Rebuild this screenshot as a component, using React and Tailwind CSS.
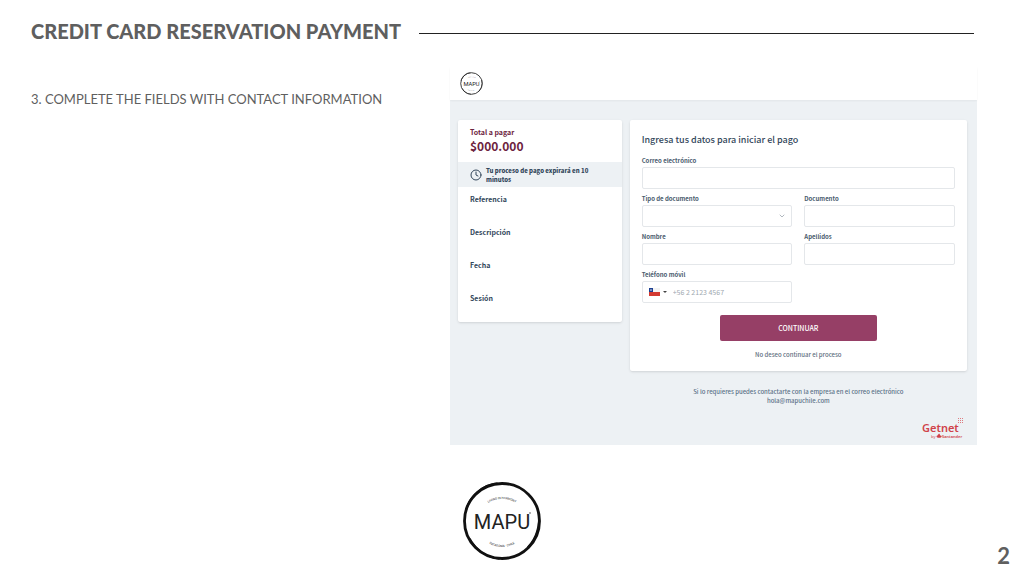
import clsx from 'clsx'
import { ChevronDown, Clock } from 'lucide-react'
import React, { useId } from 'react'

const summaryItems = ['Referencia', 'Descripción', 'Fecha', 'Sesión']

const controlClasses =
  'block h-[22px] w-full rounded-xs border border-[#e4e7ea] bg-white px-2 text-[7px] text-[#33475b] outline-none focus:border-[#963f66]'

const MapuLogo = ({ className }) => {
  const id = useId()

  return (
    <svg
      aria-label="Mapu"
      className={className}
      role="img"
      viewBox="0 0 80 80"
    >
      <defs>
        <path d="M15 41a25 23 0 0 1 50 0" id={`${id}-top`} />
        <path d="M14 40a26 26 0 0 0 52 0" id={`${id}-bottom`} />
      </defs>
      <circle
        cx="40"
        cy="40"
        fill="none"
        r="37.5"
        stroke="#111"
        strokeWidth="2.8"
      />
      <g fill="none" stroke="#111" strokeLinecap="round">
        <path d="M4 29C8 15 20 4 35 2.5" strokeWidth="2" />
        <path d="M76 29C79 44 74 58 66 66" strokeWidth="1.8" />
        <path d="M8 58C14 69 25 76 37 78" strokeWidth="1.6" />
      </g>
      <g fill="#222" fontFamily="Roboto, sans-serif">
        <text fontSize="3" textAnchor="middle">
          <textPath href={`#${id}-top`} startOffset="50%">
            LIVING IN HARMONY
          </textPath>
        </text>
        <text fontSize="20" textAnchor="middle" x="40" y="48">
          MAPU
        </text>
        <circle cx="68" cy="32" r="0.7" />
        <text fontSize="3" textAnchor="middle">
          <textPath href={`#${id}-bottom`} startOffset="50%">
            PATAGONIA - CHILE
          </textPath>
        </text>
      </g>
    </svg>
  )
}

const GetnetLogo = () => (
  <svg
    aria-label="Getnet by Santander"
    className="h-[22px] w-[43px]"
    role="img"
    viewBox="0 0 43 22"
  >
    <g fill="#d04249" fontFamily="'Noto Sans', sans-serif">
      <text fontSize="11" fontWeight="600" x="0" y="14">
        Getnet
      </text>
      <text fontSize="4" x="9" y="20">
        by
      </text>
      <path d="M17 15.4c1 .7.8 1.4 1.4 2 .9.1 1.3.5 1.3 1 0 1.8-5.2 1.8-5.2 0 0-.5.4-.9 1.1-1 0-.7.9-1 1.4-2Z" />
      <text fontSize="4" fontWeight="600" x="20" y="20">
        Santander
      </text>
    </g>
    <path
      d="M36 .5h5M36 2.5h5M36 4.5h5"
      stroke="#dd7c81"
      strokeDasharray="1 1"
      strokeWidth="1"
    />
  </svg>
)

const ChileFlag = () => (
  <svg aria-hidden="true" className="h-2 w-[11px]" viewBox="0 0 11 8">
    <path d="M0 0h11v4H0Z" fill="#f3f3f3" />
    <path d="M0 4h11v4H0Z" fill="#d33a32" />
    <path d="M0 0h4v4H0Z" fill="#1c3f91" />
    <path d="m2 .8.3.9h.9l-.7.5.3.9-.8-.6-.8.6.3-.9-.7-.5h.9Z" fill="white" />
  </svg>
)

const Field = ({ children, className, id, label }) => (
  <div className={className}>
    <label
      className="block h-3 text-[6px] leading-3 font-bold text-[#4a5c6e]"
      htmlFor={id}
    >
      {label}
    </label>
    {children}
  </div>
)

const Summary = () => (
  <aside className="rounded-xs bg-white shadow-sm">
    <div className="h-[42px] px-3 pt-[7px] text-[#6d2340]">
      <p className="text-[7px] leading-[11px] font-bold">Total a pagar</p>
      <p className="text-[12px] leading-4 font-bold">$000.000</p>
    </div>
    <div className="flex h-[25px] items-center gap-1 bg-[#edf1f4] pr-4 pl-3 text-[#33475b]">
      <Clock className="size-3 shrink-0" />
      <p className="text-[6px] leading-[9px] font-black">
        Tu proceso de pago expirará en 10
        <br />
        minutos
      </p>
    </div>
    <dl className="px-3 pt-2 text-[7px] leading-[9px] text-[#33475b]">
      {summaryItems.map((item) => (
        <div className="h-[33px] last:h-7" key={item}>
          <dt className="font-bold">{item}</dt>
          <dd />
        </div>
      ))}
    </dl>
  </aside>
)

const ContactForm = () => (
  <form
    className="rounded-xs bg-white px-3 pt-3 pb-[10px] shadow-sm"
    onSubmit={(event) => event.preventDefault()}
  >
    <h2 className="mb-2 text-[9px] leading-[15px] font-medium text-[#33475b]">
      Ingresa tus datos para iniciar el pago
    </h2>
    <div className="grid grid-cols-2 gap-x-3 gap-y-1">
      <Field className="col-span-2" id="email" label="Correo electrónico">
        <input className={controlClasses} id="email" type="email" />
      </Field>
      <Field id="document-type" label="Tipo de documento">
        <div className="relative">
          <select
            className={clsx(controlClasses, 'appearance-none')}
            defaultValue=""
            id="document-type"
          >
            <option value="" />
            <option value="rut">RUT</option>
          </select>
          <ChevronDown className="pointer-events-none absolute top-[7px] right-1.5 size-2 text-[#8a949e]" />
        </div>
      </Field>
      <Field id="document" label="Documento">
        <input className={controlClasses} id="document" type="text" />
      </Field>
      <Field id="first-name" label="Nombre">
        <input className={controlClasses} id="first-name" type="text" />
      </Field>
      <Field id="last-name" label="Apellidos">
        <input className={controlClasses} id="last-name" type="text" />
      </Field>
      <Field id="phone" label="Teléfono móvil">
        <div className="flex h-[22px] items-center rounded-xs border border-[#e4e7ea] pl-1.5">
          <button
            aria-label="Código de país"
            className="flex items-center gap-[3px]"
            type="button"
          >
            <ChileFlag />
            <svg aria-hidden="true" className="h-[2px] w-1" viewBox="0 0 4 2">
              <path d="M0 0h4L2 2Z" fill="#444" />
            </svg>
          </button>
          <input
            className="ml-1.5 h-5 w-full text-[7px] text-[#33475b] outline-none placeholder:text-[#a0a8b0]"
            id="phone"
            placeholder="+56 2 2123 4567"
            type="tel"
          />
        </div>
      </Field>
    </div>
    <div className="mt-3 flex flex-col items-center gap-2">
      <button
        className="h-[26px] w-1/2 rounded-xs bg-[#963f66] text-[7px] font-medium text-white"
        type="submit"
      >
        CONTINUAR
      </button>
      <a
        className="text-[6px] leading-3 font-medium text-[#5f6f80]"
        href="#cancel"
      >
        No deseo continuar el proceso
      </a>
    </div>
  </form>
)

const Checkout = () => (
  <section className="bg-[#edf1f4] font-['Noto_Sans_CJK_JP','Noto_Sans',sans-serif]">
    <header className="bg-white px-[10px] pt-[5px] pb-[5px] shadow-xs">
      <MapuLogo className="size-[23px]" />
    </header>
    <div className="grid grid-cols-[33fr_68fr] items-start gap-2 pt-5 pr-[10px] pl-2">
      <Summary />
      <ContactForm />
      <p className="col-start-2 mt-2 text-center text-[6px] leading-[9px] font-medium text-[#5d7389]">
        Si lo requieres puedes contactarte con la empresa en el correo
        electrónico
        <br />
        hola@mapuchile.com
      </p>
    </div>
    <div className="flex justify-end pt-[13px] pr-3 pb-[5px]">
      <GetnetLogo />
    </div>
  </section>
)

export default function App() {
  return (
    <div className="min-h-screen bg-white pt-4 pl-[31px] font-['Lato',sans-serif] text-[#5f5f5f]">
      <header className="flex items-center gap-[18px] pr-[50px]">
        <h1 className="text-[20px] leading-[30px] font-black whitespace-nowrap">
          CREDIT CARD RESERVATION PAYMENT
        </h1>
        <div className="mt-1 h-px flex-1 bg-[#222]" />
      </header>
      <main className="mt-[21px] grid grid-cols-[419px_1fr] pr-[47px]">
        <p className="pt-[22px] text-[13px] leading-5">
          3. COMPLETE THE FIELDS WITH CONTACT INFORMATION
        </p>
        <Checkout />
      </main>
      <footer className="mt-9 flex items-end justify-between pr-[14px] pl-[431px]">
        <MapuLogo className="mb-2 size-20" />
        <span className="text-[22px] leading-[26px] font-bold">2</span>
      </footer>
    </div>
  )
}
